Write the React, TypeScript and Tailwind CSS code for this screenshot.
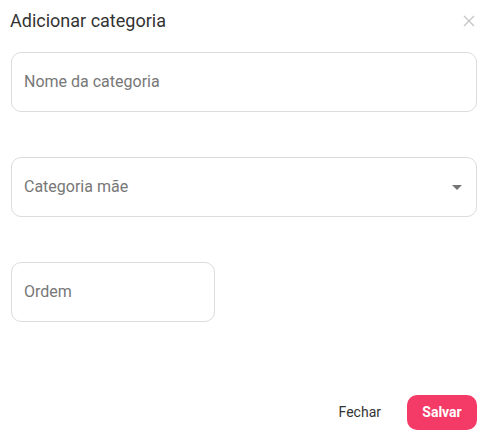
import { ChevronDown } from "lucide-react"

export default function App() {
  return (
    <div className="w-[489px] h-[446px] bg-white font-['Roboto',sans-serif] text-[#333]">
      {/* Header */}
      <div className="flex items-center justify-between pl-[10px] pr-[14px] pt-[6px] h-[36px]">
        <h2 className="text-[18px] leading-[24px] text-[#333]">Adicionar categoria</h2>
        <button className="text-[#c4c4c4]" aria-label="Fechar">
          <svg width="12" height="12" viewBox="0 0 12 12" fill="none" stroke="currentColor" strokeWidth="1.3">
            <path d="M1 1 L11 11 M11 1 L1 11" />
          </svg>
        </button>
      </div>

      {/* Form */}
      <div className="flex flex-col gap-[45px] pl-[11px] pr-[12px] pt-[16px]">
        <div className="h-[60px] rounded-[10px] border border-[#dcdcdc] flex items-center px-[12px]">
          <input
            className="w-full outline-none text-[16px] text-[#333] placeholder:text-[#777]"
            placeholder="Nome da categoria"
          />
        </div>

        <div className="h-[60px] rounded-[10px] border border-[#dcdcdc] flex items-center justify-between pl-[12px] pr-[14px]">
          <span className="text-[16px] text-[#777]">Categoria mãe</span>
          <svg width="10" height="5" viewBox="0 0 10 5" className="text-[#757575]">
            <path d="M0 0 L10 0 L5 5 Z" fill="currentColor" />
          </svg>
        </div>

        <div className="w-[204px] h-[60px] rounded-[10px] border border-[#dcdcdc] flex items-center px-[12px]">
          <input
            className="w-full outline-none text-[16px] text-[#333] placeholder:text-[#777]"
            placeholder="Ordem"
          />
        </div>
      </div>

      {/* Footer */}
      <div className="flex justify-end items-center gap-[14px] pr-[12px] mt-[73px]">
        <button className="h-[35px] px-[12px] text-[14px] text-[#333]">Fechar</button>
        <button className="h-[35px] w-[70px] rounded-[10px] bg-[#f43b67] text-white text-[14px] font-bold">
          Salvar
        </button>
      </div>
    </div>
  )
}
